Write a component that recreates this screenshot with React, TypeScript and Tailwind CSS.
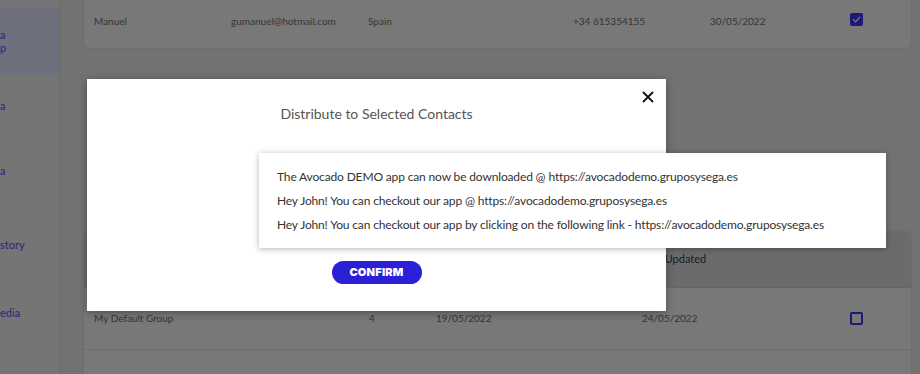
import React from "react";

const Check = () => (
  <div className="w-[13px] h-[13px] bg-[#3a32ee] rounded-[2px] flex items-center justify-center">
    <svg width="9" height="9" viewBox="0 0 10 10" fill="none">
      <path d="M1.5 5.2 L4 7.6 L8.6 2.4" stroke="white" strokeWidth="1.3" strokeLinecap="round" strokeLinejoin="round" />
    </svg>
  </div>
);

const Empty = () => <div className="w-[13px] h-[13px] border-2 border-[#3832f0] rounded-[2px]" />;

export default function App() {
  return (
    <div className="relative w-[920px] h-[374px] overflow-hidden bg-[#e4e4e4] flex font-['Lato',sans-serif]">
      {/* Sidebar */}
      <aside className="w-[60px] shrink-0 bg-[#eaeaea] border-r border-[#d4d4d4] overflow-hidden text-[11px] text-[#6f5ef5] font-semibold">
        <div className="mt-[8px] h-[67px] bg-[#dce0fc] flex flex-col justify-center leading-[13px] pb-[2px]">
          <span>a</span>
          <span>p</span>
        </div>
        <div className="h-[62px] flex items-center">a</div>
        <div className="h-[68px] flex items-center">a</div>
        <div className="h-[80px] flex items-center">story</div>
        <div className="h-[56px] flex items-center">edia</div>
      </aside>

      {/* Main */}
      <main className="flex-1 pl-[23px] pr-[8px] text-[10px] text-[#6c6c6c]">
        <div className="h-[49px] bg-[#f0f0f0] border border-t-0 border-[#dadada] rounded-b-md flex items-start pt-[14px] pl-[10px]">
          <span className="w-[137px]">Manuel</span>
          <span className="w-[137px]">gumanuel@hotmail.com</span>
          <span className="w-[205px]">Spain</span>
          <span className="w-[137px]">+34 615354155</span>
          <span className="w-[140px]">30/05/2022</span>
          <div className="-mt-[1px]"><Check /></div>
        </div>

        <div className="mt-[181px] bg-[#f0f0f0] border border-[#dadada] rounded-t-md">
          <div className="h-[57px] bg-[#d6d6d6] rounded-t-md flex items-center pl-[10px] text-[11px] text-[#3c3c3c] border-b border-[#cacaca]">
            <span className="w-[275px]">Name</span>
            <span className="w-[67px]">Contacts</span>
            <span className="w-[206px]">Created</span>
            <span className="w-[208px]">Last Updated</span>
          </div>
          <div className="h-[62px] flex items-center pl-[10px] border-b border-[#dadada]">
            <span className="w-[275px]">My Default Group</span>
            <span className="w-[67px]">4</span>
            <span className="w-[206px]">19/05/2022</span>
            <span className="w-[208px]">24/05/2022</span>
            <Empty />
          </div>
          <div className="h-[62px]" />
        </div>
      </main>

      {/* Backdrop */}
      <div className="absolute inset-0 bg-black/50" />

      {/* Modal */}
      <div className="absolute left-[87px] top-[79px] w-[579px] h-[232px] bg-white shadow-[0_2px_8px_rgba(0,0,0,0.35)] flex flex-col items-center">
        <button className="absolute right-[12px] top-[12px] w-[12px] h-[12px]">
          <svg width="12" height="12" viewBox="0 0 12 12">
            <path d="M1 1 L11 11 M11 1 L1 11" stroke="#111" strokeWidth="1.8" />
          </svg>
        </button>
        <h2 className="mt-[26px] text-[14px] text-[#555] leading-[18px]">
          Distribute to Selected Contacts
        </h2>
        <div className="flex-1" />
        <button className="mb-[27px] w-[90px] h-[23px] rounded-full bg-[#2b1fd8] text-white text-[11px] font-black tracking-[0.2px] font-['Inter',sans-serif]">
          CONFIRM
        </button>

        {/* Dropdown list */}
        <div className="absolute left-[172px] top-[74px] w-[627px] h-[95px] bg-white shadow-[0_1px_6px_rgba(0,0,0,0.3)] pt-[12px] pl-[18px] text-[12px] tracking-[-0.15px] text-[#333] leading-[24px] whitespace-nowrap">
          <div>The Avocado DEMO app can now be downloaded @ https://avocadodemo.gruposysega.es</div>
          <div>Hey John! You can checkout our app @ https://avocadodemo.gruposysega.es</div>
          <div>Hey John! You can checkout our app by clicking on the following link - https://avocadodemo.gruposysega.es</div>
        </div>
      </div>
    </div>
  );
}
